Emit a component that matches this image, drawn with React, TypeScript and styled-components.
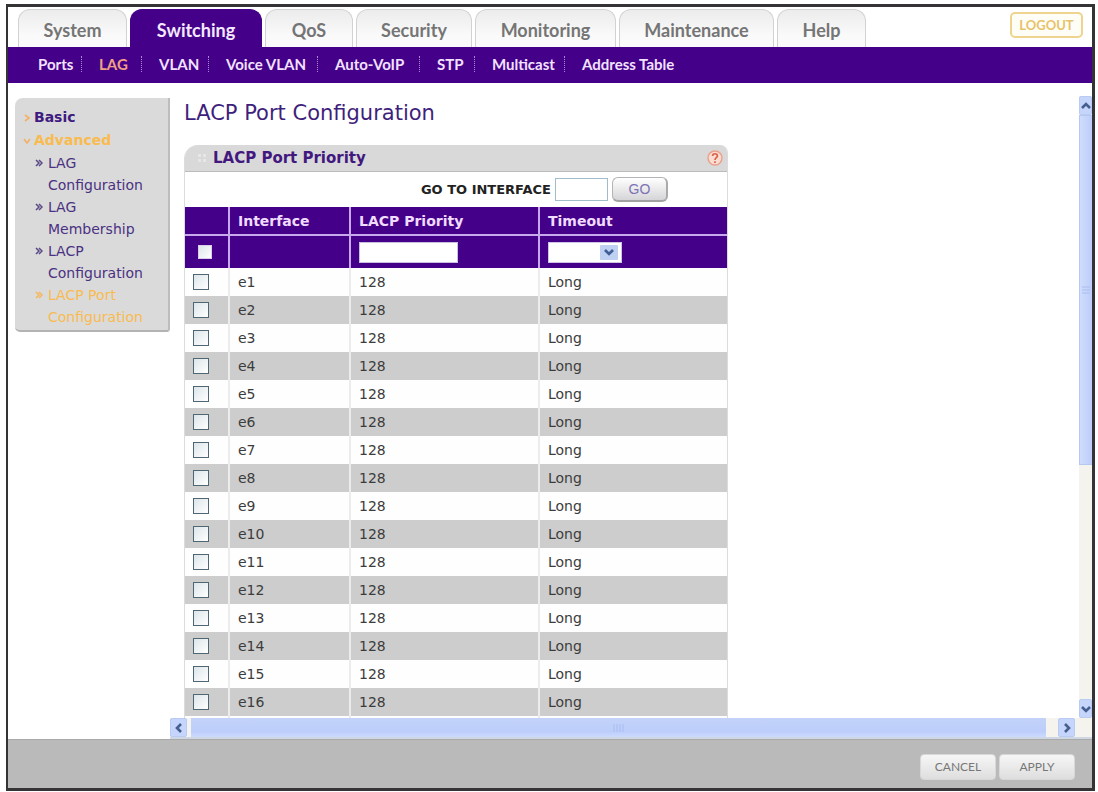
import React from "react";
import styled, { createGlobalStyle } from "styled-components";

const verdana = `Verdana, "DejaVu Sans", sans-serif`;
const display = `Lato, sans-serif`;
const purple = "#440089";

const Global = createGlobalStyle`
  * { box-sizing: border-box; }
  html, body, #root { height: 100%; }
  body { margin: 0; background: #fff; font-family: ${verdana}; }
  button, input, select { font-family: inherit; margin: 0; }
  svg { flex: none; }
`;

const Page = styled.div`
  height: 100%;
  padding: 4px 3px 1px 6px;
`;

const Frame = styled.div`
  height: 100%;
  display: flex;
  flex-direction: column;
  border: 3px solid #353336;
  border-left-width: 2px;
  overflow: hidden;
`;

const TopBar = styled.header`
  display: flex;
  justify-content: space-between;
  align-items: flex-end;
  flex: none;
  height: 40px;
  padding: 0 9px 0 10px;
`;

const Tabs = styled.nav`
  display: flex;
  gap: 3px;
`;

const Tab = styled.a<{ $width: number; $active?: boolean }>`
  width: ${(p) => p.$width}px;
  height: 38px;
  padding-top: 9px;
  border: 1px solid ${(p) => (p.$active ? purple : "#d2d2d2")};
  border-bottom: 0;
  border-radius: 12px 12px 0 0;
  background: ${(p) => (p.$active ? purple : "linear-gradient(#ececec, #fafafa 70%)")};
  color: ${(p) => (p.$active ? "#f4e8ff" : "#757575")};
  font: 700 18px/22px ${display};
  text-align: center;
  text-decoration: none;
`;

const Logout = styled.button`
  align-self: flex-start;
  margin-top: 5px;
  width: 73px;
  height: 26px;
  padding: 0;
  border: 2px solid #eed48f;
  border-radius: 5px;
  background: #fffef6;
  color: #e6c26a;
  font: 700 13px/20px ${display};
`;

const SubNav = styled.nav`
  display: flex;
  align-items: flex-start;
  flex: none;
  height: 36px;
  padding: 6px 0 0 30px;
  background: ${purple};
`;

const SubLink = styled.a<{ $width: number; $active?: boolean }>`
  display: flex;
  align-items: center;
  justify-content: space-between;
  width: ${(p) => p.$width}px;
  margin-right: 17px;
  color: ${(p) => (p.$active ? "#f0a184" : "#f3e2ff")};
  font: 700 15px/22px ${display};
  text-decoration: none;
  white-space: nowrap;
`;

const Divider = styled.span`
  height: 16px;
  border-left: 1px dotted #a98bd0;
`;

const Body = styled.div`
  display: flex;
  flex: 1;
  min-height: 0;
`;

const SideColumn = styled.div`
  flex: none;
  width: 162px;
  padding: 15px 0 0 7px;
`;

const SideMenu = styled.nav`
  padding: 8px 8px 2px;
  border-right: 2px solid #bdbdbd;
  border-bottom: 2px solid #b3b3b3;
  border-radius: 8px 0 3px 5px;
  background: #dadada;
`;

const Group = styled.a<{ $active?: boolean }>`
  display: flex;
  align-items: center;
  gap: 3px;
  color: ${(p) => (p.$active ? "#f9bb50" : "#3f1a80")};
  font: 700 14px/23px ${verdana};
  text-decoration: none;
`;

const Item = styled.a<{ $active?: boolean }>`
  display: flex;
  gap: 5px;
  margin-left: 12px;
  color: ${(p) => (p.$active ? "#f9bb50" : "#4a3182")};
  font: 400 14px/22px ${verdana};
  text-decoration: none;
`;

const Main = styled.main`
  display: flex;
  flex-direction: column;
  flex: 1;
  min-width: 0;
`;

const Upper = styled.div`
  display: flex;
  flex: 1;
  min-height: 0;
`;

const Content = styled.div`
  flex: 1;
  min-width: 0;
  padding: 16px 0 0 14px;
  overflow: hidden;
`;

const Title = styled.h1`
  margin: 0 0 18px;
  color: #3f1f7c;
  font: 400 21px/28px ${verdana};
`;

const Panel = styled.section`
  width: 544px;
  max-width: 100%;
  border: solid #dcdcdc;
  border-width: 0 1px;
  border-radius: 14px 8px 0 0;
`;

const PanelHead = styled.div`
  display: flex;
  align-items: center;
  height: 27px;
  padding: 0 4px 0 12px;
  border-bottom: 1px solid #bcbcbc;
  border-radius: 13px 7px 0 0;
  background: #d9d9d9;
`;

const PanelTitle = styled.h2`
  flex: 1;
  margin: 0 0 0 6px;
  color: #42187f;
  font: 700 15px/24px ${verdana};
`;

const GoTo = styled.form`
  display: flex;
  align-items: center;
  justify-content: flex-end;
  gap: 4px;
  height: 35px;
  padding-right: 59px;
`;

const GoLabel = styled.label`
  color: #222;
  font: 700 13px/20px ${verdana};
`;

const GoInput = styled.input`
  width: 53px;
  height: 23px;
  border: 1px solid #a3bccb;
  background: #fff;
`;

const GoButton = styled.button`
  width: 56px;
  height: 25px;
  padding: 0;
  border: 1px solid #b4b4b8;
  border-right: 2px solid #aaa;
  border-bottom: 2px solid #a2a2a2;
  border-radius: 6px;
  background: linear-gradient(#fff, #d5d5d8);
  color: #7c72b4;
  font: 400 14px/20px "Liberation Sans", Arial, sans-serif;
`;

const Table = styled.table`
  width: 100%;
  table-layout: fixed;
  border-collapse: collapse;
  font: 400 14px/18px ${verdana};
`;

const HeadCell = styled.th<{ $tall?: boolean }>`
  height: ${(p) => (p.$tall ? 33 : 28)}px;
  padding: 0 8px;
  border-left: 2px solid #c9a9ee;
  border-bottom: ${(p) => (p.$tall ? "0" : "2px solid #c9a9ee")};
  background: ${purple};
  color: #f0dcff;
  font: 700 14px/18px ${verdana};
  text-align: left;
  white-space: nowrap;
  &:first-child { border-left: 0; }
`;

const Row = styled.tr`
  background: #fefefe;
  &:nth-child(even) { background: #cdcdcd; }
`;

const Cell = styled.td`
  height: 28px;
  padding: 0 8px;
  border-left: 2px solid #ececec;
  color: #3c3c3c;
  &:first-child { border-left: 0; }
`;

const Check = styled.input<{ $plain?: boolean }>`
  appearance: none;
  display: block;
  width: ${(p) => (p.$plain ? 14 : 16)}px;
  height: ${(p) => (p.$plain ? 14 : 16)}px;
  margin: 0 0 0 ${(p) => (p.$plain ? 5 : 0)}px;
  border: ${(p) => (p.$plain ? "1px solid #d9cde8" : "1px solid #4f6675")};
  background: linear-gradient(135deg, #dde6ea, #fff);
`;

const PriorityInput = styled.input`
  display: block;
  width: 99px;
  height: 21px;
  border: 1px solid #c9c0e0;
  background: #fff;
`;

const SelectWrap = styled.span`
  display: grid;
  width: 74px;
  height: 21px;
  align-items: center;
  justify-items: end;
  background: #fff;
  & > * { grid-area: 1 / 1; }
  & > svg { margin-right: 4px; pointer-events: none; z-index: 1; }
`;

const TimeoutSelect = styled.select`
  appearance: none;
  width: 100%;
  height: 100%;
  border: 1px solid #cfc4e6;
  border-radius: 0;
  background: #fff;
`;

const VBar = styled.div`
  display: flex;
  flex-direction: column;
  flex: none;
  width: 13px;
  padding-top: 13px;
  background: linear-gradient(#fff 13px, #f4f3ee 13px);
`;

const VThumb = styled.div`
  display: flex;
  align-items: center;
  justify-content: center;
  height: 350px;
  margin-bottom: auto;
  border: solid #b4c8f2;
  border-width: 1px 0 1px 1px;
  background: linear-gradient(90deg, #cfdcfd, #bdcdf9);
`;

const HBar = styled.div`
  display: flex;
  flex: none;
  gap: 4px;
  height: 21px;
  padding-right: 17px;
  border-bottom: 2px solid #cfd6e4;
  background: #f4f3ee;
`;

const HThumb = styled.div`
  display: flex;
  align-items: center;
  justify-content: center;
  flex: 1;
  margin-right: 8px;
  background: linear-gradient(#c3d3f8, #bccdfb 70%, #cbdafd);
`;

const Arrow = styled.button`
  display: flex;
  align-items: center;
  justify-content: center;
  flex: none;
  width: 17px;
  height: 19px;
  padding: 0;
  border: 1px solid #b9cbf3;
  border-radius: 2px;
  background: #c6d5fb;
`;

const VArrow = styled(Arrow)`
  width: 13px;
`;

const Footer = styled.footer`
  display: flex;
  justify-content: flex-end;
  flex: none;
  gap: 3px;
  height: 49px;
  padding: 14px 17px 0 0;
  border-top: 1px solid #a9a9a9;
  background: #bababa;
`;

const ActionButton = styled.button`
  width: 76px;
  height: 26px;
  padding: 0;
  border: 1px solid #d8d8d8;
  border-radius: 4px;
  background: linear-gradient(#f6f6f6, #dedede);
  color: #777;
  font: 400 12px/20px ${display};
`;

const Chevron = ({ dir }: { dir: "up" | "down" | "left" | "right" }) => {
  const d = {
    up: "M1 7 5 3 9 7",
    down: "M1 3 5 7 9 3",
    left: "M7 1 3 5 7 9",
    right: "M3 1 7 5 3 9",
  }[dir];
  return (
    <svg width="10" height="10" viewBox="0 0 10 10" aria-hidden="true">
      <path d={d} fill="none" stroke="#465f91" strokeWidth="2.6" />
    </svg>
  );
};

const Marker = ({ open }: { open?: boolean }) => (
  <svg width="8" height="10" viewBox="0 0 8 10" aria-hidden="true">
    <path d={open ? "M1 3 4 7 7 3" : "M2 2 6 5 2 8"} fill="none" stroke="#f3b066" strokeWidth="1.6" />
  </svg>
);

const Bullet = ({ active }: { active?: boolean }) => (
  <svg width="8" height="22" viewBox="0 0 8 22" aria-hidden="true">
    <path d="M1 8 4 11 1 14M4 8 7 11 4 14" fill="none" stroke={active ? "#f6b65a" : "#5b4a86"} strokeWidth="1.5" />
  </svg>
);

const tabs = [
  { name: "System", width: 109 },
  { name: "Switching", width: 132 },
  { name: "QoS", width: 88 },
  { name: "Security", width: 116 },
  { name: "Monitoring", width: 141 },
  { name: "Maintenance", width: 155 },
  { name: "Help", width: 89 },
];

const links = [
  { name: "Ports", width: 44 },
  { name: "LAG", width: 43 },
  { name: "VLAN", width: 50 },
  { name: "Voice VLAN", width: 92 },
  { name: "Auto-VoIP", width: 85 },
  { name: "STP", width: 38 },
  { name: "Multicast", width: 73 },
  { name: "Address Table", width: 100 },
];

const items = ["LAG Configuration", "LAG Membership", "LACP Configuration", "LACP Port Configuration"];
const ports = Array.from({ length: 16 }, (_, i) => `e${i + 1}`);

export default function App() {
  return (
    <Page>
      <Global />
      <Frame>
        <TopBar>
          <Tabs aria-label="Main">
            {tabs.map((t) => (
              <Tab key={t.name} href="#" $width={t.width} $active={t.name === "Switching"}>
                {t.name}
              </Tab>
            ))}
          </Tabs>
          <Logout type="button">LOGOUT</Logout>
        </TopBar>
        <SubNav aria-label="Switching">
          {links.map((l, i) => (
            <SubLink key={l.name} href="#" $width={l.width} $active={l.name === "LAG"}>
              {l.name}
              {i < links.length - 1 && <Divider />}
            </SubLink>
          ))}
        </SubNav>
        <Body>
          <SideColumn>
            <SideMenu aria-label="LAG">
              <Group href="#"><Marker />Basic</Group>
              <Group href="#" $active><Marker open />Advanced</Group>
              {items.map((name, i) => (
                <Item key={name} href="#" $active={i === 3}>
                  <Bullet active={i === 3} />
                  <span>{name}</span>
                </Item>
              ))}
            </SideMenu>
          </SideColumn>
          <Main>
            <Upper>
              <Content>
                <Title>LACP Port Configuration</Title>
                <Panel>
                  <PanelHead>
                    <svg width="10" height="10" viewBox="0 0 10 10" aria-hidden="true">
                      <path d="M1 1h3v3H1zM6 1h3v3H6zM1 6h3v3H1zM6 6h3v3H6z" fill="#e6e6e6" />
                    </svg>
                    <PanelTitle>LACP Port Priority</PanelTitle>
                    <svg width="16" height="16" viewBox="0 0 16 16" role="img" aria-label="Help">
                      <circle cx="8" cy="8" r="7" fill="#fbdcd0" stroke="#e9a08c" strokeWidth="1.4" />
                      <path d="M5.6 6C5.6 3 10.6 3 10.4 6 10.3 7.8 8 7.6 8 10M8 11.2v1.8" fill="none" stroke="#d9604a" strokeWidth="1.7" />
                    </svg>
                  </PanelHead>
                  <GoTo onSubmit={(e) => e.preventDefault()}>
                    <GoLabel htmlFor="goto">GO TO INTERFACE</GoLabel>
                    <GoInput id="goto" type="text" />
                    <GoButton type="submit">GO</GoButton>
                  </GoTo>
                  <Table>
                    <colgroup>
                      <col style={{ width: 44 }} />
                      <col style={{ width: 121 }} />
                      <col style={{ width: 189 }} />
                      <col />
                    </colgroup>
                    <thead>
                      <tr>
                        <HeadCell />
                        <HeadCell scope="col">Interface</HeadCell>
                        <HeadCell scope="col">LACP Priority</HeadCell>
                        <HeadCell scope="col">Timeout</HeadCell>
                      </tr>
                      <tr>
                        <HeadCell $tall><Check $plain type="checkbox" aria-label="Select all" /></HeadCell>
                        <HeadCell $tall />
                        <HeadCell $tall><PriorityInput type="text" aria-label="LACP Priority" /></HeadCell>
                        <HeadCell $tall>
                          <SelectWrap>
                            <TimeoutSelect aria-label="Timeout" defaultValue="">
                              <option value="" />
                              <option>Long</option>
                              <option>Short</option>
                            </TimeoutSelect>
                            <svg width="18" height="15" viewBox="0 0 18 15" aria-hidden="true">
                              <rect width="18" height="15" rx="1" fill="#bfd0f2" />
                              <path d="M5 5 9 9 13 5" fill="none" stroke="#3f5d96" strokeWidth="2.6" />
                            </svg>
                          </SelectWrap>
                        </HeadCell>
                      </tr>
                    </thead>
                    <tbody>
                      {ports.map((p) => (
                        <Row key={p}>
                          <Cell><Check type="checkbox" aria-label={`Select ${p}`} /></Cell>
                          <Cell>{p}</Cell>
                          <Cell>128</Cell>
                          <Cell>Long</Cell>
                        </Row>
                      ))}
                      <Row>
                        <Cell />
                        <Cell />
                        <Cell />
                        <Cell />
                      </Row>
                    </tbody>
                  </Table>
                </Panel>
              </Content>
              <VBar>
                <VArrow type="button" aria-label="Scroll up"><Chevron dir="up" /></VArrow>
                <VThumb>
                  <svg width="8" height="8" viewBox="0 0 8 8" aria-hidden="true">
                    <path d="M0 1h8M0 4h8M0 7h8" stroke="#a9bdee" />
                  </svg>
                </VThumb>
                <VArrow type="button" aria-label="Scroll down"><Chevron dir="down" /></VArrow>
              </VBar>
            </Upper>
            <HBar>
              <Arrow type="button" aria-label="Scroll left"><Chevron dir="left" /></Arrow>
              <HThumb>
                <svg width="12" height="8" viewBox="0 0 12 8" aria-hidden="true">
                  <path d="M1 0v8M4 0v8M7 0v8M10 0v8" stroke="#a9bdf0" />
                </svg>
              </HThumb>
              <Arrow type="button" aria-label="Scroll right"><Chevron dir="right" /></Arrow>
            </HBar>
          </Main>
        </Body>
        <Footer>
          <ActionButton type="button">CANCEL</ActionButton>
          <ActionButton type="button">APPLY</ActionButton>
        </Footer>
      </Frame>
    </Page>
  );
}
